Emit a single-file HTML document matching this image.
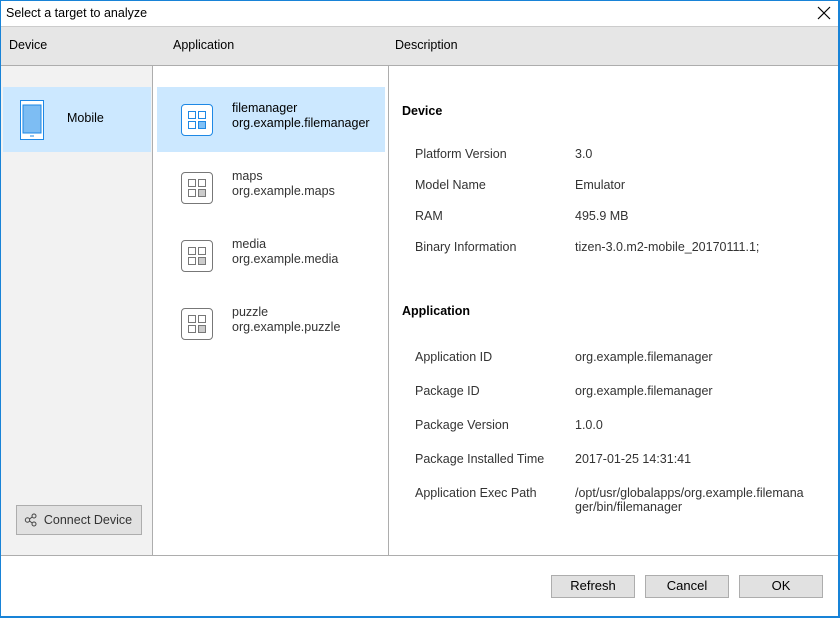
<!DOCTYPE html>
<html><head><meta charset="utf-8"><style>
*{margin:0;padding:0;box-sizing:border-box}
body{width:840px;height:618px;overflow:hidden;background:#fff;font-family:"Liberation Sans",sans-serif;font-size:12.5px;color:#000;position:relative}
.a{position:absolute;white-space:nowrap}
.btn{position:absolute;background:#e1e1e1;border:1px solid #adadad;text-align:center;font-size:13px;line-height:20px;color:#000}
.ico{position:absolute;width:32px;height:32px;border:1px solid #777;border-radius:4px;background:#fff}
.ico i{position:absolute;width:8px;height:8px;border:1px solid #777}
.t1{color:#333}
</style></head><body>
<div class="a" style="left:0;top:0;width:840px;height:618px;border:1px solid #1883d7;border-right-width:2px;border-bottom-width:2px"></div>
<div class="a" style="left:6px;top:6px">Select a target to analyze</div>
<svg class="a" style="left:817px;top:6px" width="14" height="14"><path d="M1 1L13 13M13 1L1 13" stroke="#000" stroke-width="1.2"/></svg>
<div class="a" style="left:1px;top:26px;width:837px;height:40px;background:#e6e6e6;border-top:1px solid #ccc;border-bottom:1px solid #adadad"></div>
<div class="a" style="left:9px;top:38px">Device</div>
<div class="a" style="left:173px;top:38px">Application</div>
<div class="a" style="left:395px;top:38px">Description</div>
<div class="a" style="left:1px;top:66px;width:152px;height:489px;background:#f2f2f2;border-right:1px solid #adadad"></div>
<div class="a" style="left:388px;top:66px;width:1px;height:489px;background:#adadad"></div>
<div class="a" style="left:1px;top:555px;width:837px;height:1px;background:#adadad"></div>
<div class="a" style="left:3px;top:87px;width:148px;height:65px;background:#cce8ff"></div>
<svg class="a" style="left:20px;top:100px" width="24" height="40"><rect x="0.5" y="0.5" width="23" height="39" fill="#fff" stroke="#1e88e5"/><rect x="3" y="5" width="18" height="28" fill="#7dbdf3" stroke="#1e88e5"/><path d="M10 36H14" stroke="#1e88e5"/></svg>
<div class="a" style="left:67px;top:111px">Mobile</div>
<div class="btn" style="left:16px;top:505px;width:126px;height:30px;line-height:28px;font-size:12.5px;color:#333;padding-left:18px">Connect Device</div>
<svg class="a" style="left:24px;top:513px" width="14" height="14"><circle cx="3.5" cy="7" r="2.2" fill="none" stroke="#444"/><circle cx="10" cy="3" r="2" fill="none" stroke="#444"/><circle cx="10" cy="11" r="2" fill="none" stroke="#444"/><path d="M5.5 6L8.2 4M5.5 8L8.2 10" stroke="#444"/></svg>
<div class="a" style="left:157px;top:87px;width:228px;height:65px;background:#cce8ff"></div>
<div class="ico" style="left:181px;top:104px;border-color:#1e88e5"><i style="left:6px;top:6px;border-color:#1e88e5"></i><i style="left:16px;top:6px;border-color:#1e88e5"></i><i style="left:6px;top:16px;border-color:#1e88e5"></i><i style="left:16px;top:16px;border-color:#1e88e5;background:#80c0f5"></i></div>
<div class="a" style="left:232px;top:101px;line-height:15px">filemanager<br>org.example.filemanager</div>
<div class="ico" style="left:181px;top:172px"><i style="left:6px;top:6px"></i><i style="left:16px;top:6px"></i><i style="left:6px;top:16px"></i><i style="left:16px;top:16px;background:#ccc"></i></div>
<div class="a t1" style="left:232px;top:169px;line-height:15px">maps<br>org.example.maps</div>
<div class="ico" style="left:181px;top:240px"><i style="left:6px;top:6px"></i><i style="left:16px;top:6px"></i><i style="left:6px;top:16px"></i><i style="left:16px;top:16px;background:#ccc"></i></div>
<div class="a t1" style="left:232px;top:237px;line-height:15px">media<br>org.example.media</div>
<div class="ico" style="left:181px;top:308px"><i style="left:6px;top:6px"></i><i style="left:16px;top:6px"></i><i style="left:6px;top:16px"></i><i style="left:16px;top:16px;background:#ccc"></i></div>
<div class="a t1" style="left:232px;top:305px;line-height:15px">puzzle<br>org.example.puzzle</div>
<div class="a" style="left:402px;top:104px;font-weight:bold">Device</div>
<div class="a t1" style="left:415px;top:147px">Platform Version</div><div class="a t1" style="left:575px;top:147px">3.0</div>
<div class="a t1" style="left:415px;top:178px">Model Name</div><div class="a t1" style="left:575px;top:178px">Emulator</div>
<div class="a t1" style="left:415px;top:209px">RAM</div><div class="a t1" style="left:575px;top:209px">495.9 MB</div>
<div class="a t1" style="left:415px;top:240px">Binary Information</div><div class="a t1" style="left:575px;top:240px">tizen-3.0.m2-mobile_20170111.1;</div>
<div class="a" style="left:402px;top:304px;font-weight:bold">Application</div>
<div class="a t1" style="left:415px;top:350px">Application ID</div><div class="a t1" style="left:575px;top:350px">org.example.filemanager</div>
<div class="a t1" style="left:415px;top:384px">Package ID</div><div class="a t1" style="left:575px;top:384px">org.example.filemanager</div>
<div class="a t1" style="left:415px;top:418px">Package Version</div><div class="a t1" style="left:575px;top:418px">1.0.0</div>
<div class="a t1" style="left:415px;top:452px">Package Installed Time</div><div class="a t1" style="left:575px;top:452px">2017-01-25 14:31:41</div>
<div class="a t1" style="left:415px;top:486px">Application Exec Path</div><div class="a t1" style="left:575px;top:486px;line-height:14px">/opt/usr/globalapps/org.example.filemana<br>ger/bin/filemanager</div>
<div class="btn" style="left:551px;top:575px;width:84px;height:23px">Refresh</div>
<div class="btn" style="left:645px;top:575px;width:84px;height:23px">Cancel</div>
<div class="btn" style="left:739px;top:575px;width:84px;height:23px">OK</div>
</body></html>
